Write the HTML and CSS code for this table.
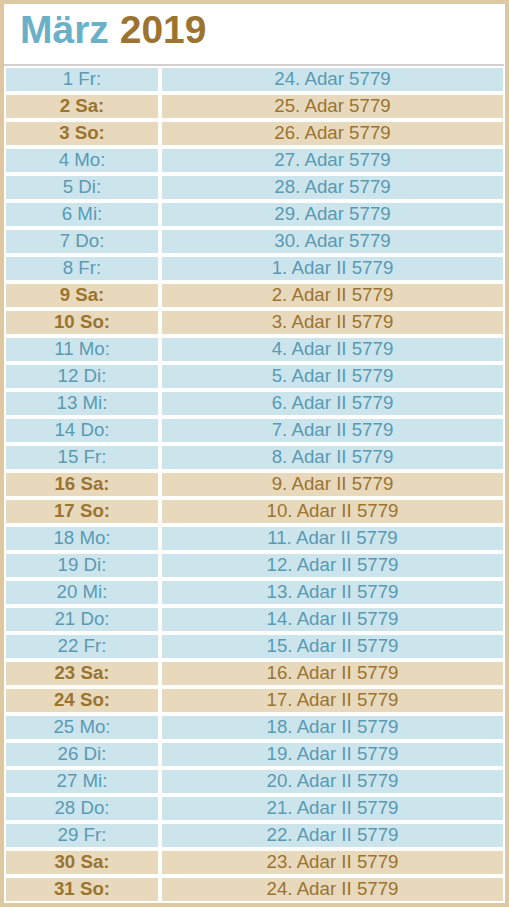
FILE: index.html
```html
<!DOCTYPE html>
<html lang="de">
<head>
<meta charset="utf-8">
<title>März 2019</title>
<link rel="stylesheet" href="styles.css">
</head>
<body>
<div class="frame">
  <div class="header"><span class="month">März</span> <span class="year">2019</span></div>
  <div class="rule"></div>
  <div class="grid" id="grid">
    <div class="c wd">1 Fr:</div><div class="c wd">24. Adar 5779</div>
    <div class="c we b">2 Sa:</div><div class="c we">25. Adar 5779</div>
    <div class="c we b">3 So:</div><div class="c we">26. Adar 5779</div>
    <div class="c wd">4 Mo:</div><div class="c wd">27. Adar 5779</div>
    <div class="c wd">5 Di:</div><div class="c wd">28. Adar 5779</div>
    <div class="c wd">6 Mi:</div><div class="c wd">29. Adar 5779</div>
    <div class="c wd">7 Do:</div><div class="c wd">30. Adar 5779</div>
    <div class="c wd">8 Fr:</div><div class="c wd">1. Adar II 5779</div>
    <div class="c we b">9 Sa:</div><div class="c we">2. Adar II 5779</div>
    <div class="c we b">10 So:</div><div class="c we">3. Adar II 5779</div>
    <div class="c wd">11 Mo:</div><div class="c wd">4. Adar II 5779</div>
    <div class="c wd">12 Di:</div><div class="c wd">5. Adar II 5779</div>
    <div class="c wd">13 Mi:</div><div class="c wd">6. Adar II 5779</div>
    <div class="c wd">14 Do:</div><div class="c wd">7. Adar II 5779</div>
    <div class="c wd">15 Fr:</div><div class="c wd">8. Adar II 5779</div>
    <div class="c we b">16 Sa:</div><div class="c we">9. Adar II 5779</div>
    <div class="c we b">17 So:</div><div class="c we">10. Adar II 5779</div>
    <div class="c wd">18 Mo:</div><div class="c wd">11. Adar II 5779</div>
    <div class="c wd">19 Di:</div><div class="c wd">12. Adar II 5779</div>
    <div class="c wd">20 Mi:</div><div class="c wd">13. Adar II 5779</div>
    <div class="c wd">21 Do:</div><div class="c wd">14. Adar II 5779</div>
    <div class="c wd">22 Fr:</div><div class="c wd">15. Adar II 5779</div>
    <div class="c we b">23 Sa:</div><div class="c we">16. Adar II 5779</div>
    <div class="c we b">24 So:</div><div class="c we">17. Adar II 5779</div>
    <div class="c wd">25 Mo:</div><div class="c wd">18. Adar II 5779</div>
    <div class="c wd">26 Di:</div><div class="c wd">19. Adar II 5779</div>
    <div class="c wd">27 Mi:</div><div class="c wd">20. Adar II 5779</div>
    <div class="c wd">28 Do:</div><div class="c wd">21. Adar II 5779</div>
    <div class="c wd">29 Fr:</div><div class="c wd">22. Adar II 5779</div>
    <div class="c we b">30 Sa:</div><div class="c we">23. Adar II 5779</div>
    <div class="c we b">31 So:</div><div class="c we">24. Adar II 5779</div>
  </div>
</div>
</body>
</html>
```
FILE: styles.css
```css
html, body {
  margin: 0;
  padding: 0;
  background: #ffffff;
}
body {
  font-family: "Liberation Sans", Arial, sans-serif;
}
.frame {
  width: 501px;
  height: 899px;
  border: 4px solid #dcc9a3;
  background: #ffffff;
  display: flex;
  flex-direction: column;
}
.header {
  height: 60px;
  padding-left: 16px;
  font-size: 39px;
  font-weight: bold;
  line-height: 52px;
  box-sizing: border-box;
}
.month { color: #6bb0c9; }
.year { color: #9a7430; }
.rule {
  height: 2px;
  margin-right: 1px;
  background: #d0d0d0;
}
.grid {
  display: grid;
  grid-template-columns: 152px 341px;
  grid-auto-rows: 23px;
  column-gap: 4px;
  row-gap: 4px;
  padding: 2px;
}
.c {
  text-align: center;
  font-size: 18.7px;
  line-height: 21px;
}
.wd {
  background: #cce5ed;
  color: #5a9ab3;
}
.we {
  background: #e8d9bd;
  color: #9a7430;
}
.b { font-weight: bold; }
```
